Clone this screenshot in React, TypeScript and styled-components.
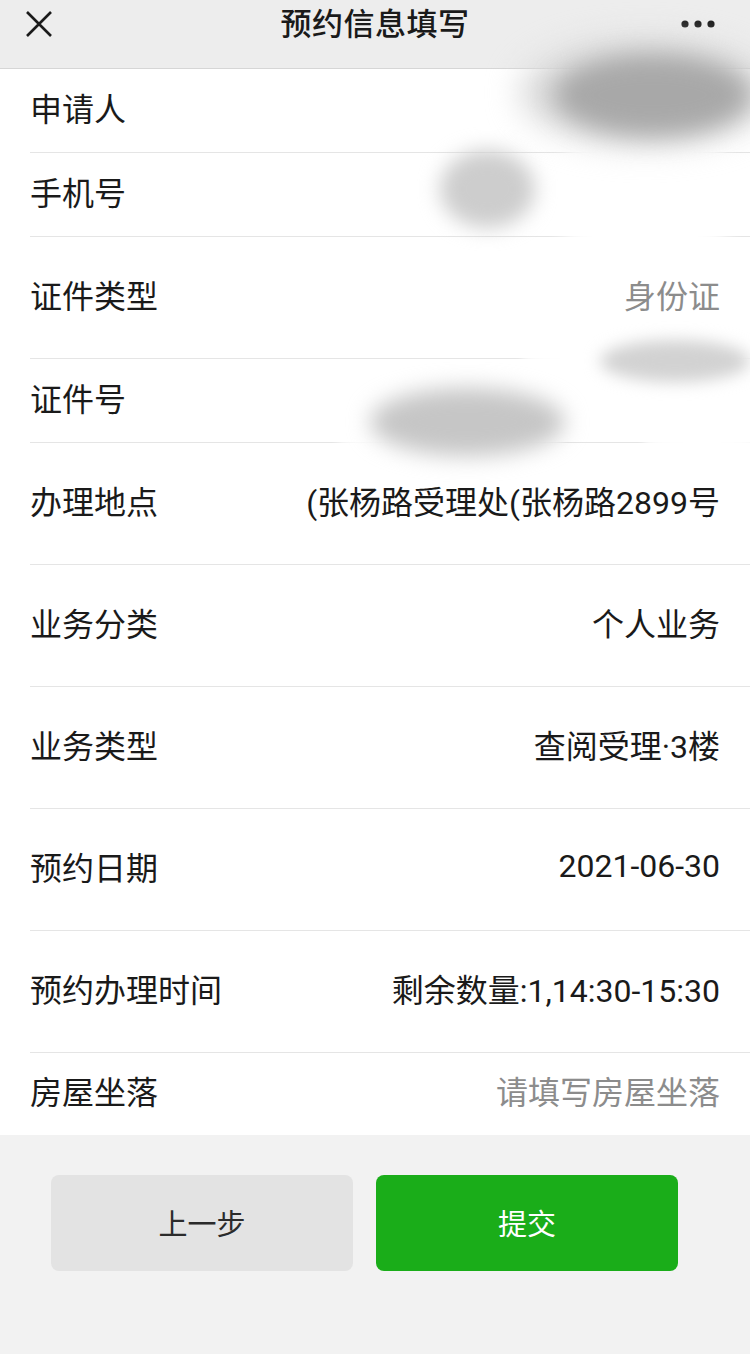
import styled, { createGlobalStyle } from 'styled-components';

type Field = {
	label: string;
	value?: string;
	muted?: boolean;
	size: 'short' | 'tall' | 'last';
};

const fields: Field[] = [
	{ label: '申请人', size: 'short' },
	{ label: '手机号', size: 'short' },
	{ label: '证件类型', value: '身份证', muted: true, size: 'tall' },
	{ label: '证件号', size: 'short' },
	{ label: '办理地点', value: '(张杨路受理处(张杨路2899号', size: 'tall' },
	{ label: '业务分类', value: '个人业务', size: 'tall' },
	{ label: '业务类型', value: '查阅受理·3楼', size: 'tall' },
	{ label: '预约日期', value: '2021-06-30', size: 'tall' },
	{ label: '预约办理时间', value: '剩余数量:1,14:30-15:30', size: 'tall' },
	{ label: '房屋坐落', value: '请填写房屋坐落', muted: true, size: 'last' }
];

const rowHeights = { short: 84, tall: 122, last: 82 };

// redaction smudges lying over the personal data (white wipes first, grey on top)
const smudges = [
	{ x: 525, y: 140, w: 240, h: 110, c: '#ffffff', b: 4 },
	{ x: 520, y: 350, w: 240, h: 18, c: '#ffffff', b: 3 },
	{ x: 335, y: 436, w: 230, h: 14, c: '#ffffff', b: 3 },
	{ x: 642, y: 436, w: 120, h: 14, c: '#ffffff', b: 3 },
	{ x: 520, y: 40, w: 250, h: 105, c: '#d8d8d8', b: 16 },
	{ x: 555, y: 55, w: 195, h: 80, c: '#a8a8a8', b: 12 },
	{ x: 440, y: 150, w: 95, h: 78, c: '#cdcdcd', b: 10 },
	{ x: 600, y: 340, w: 150, h: 42, c: '#d2d2d2', b: 8 },
	{ x: 370, y: 388, w: 195, h: 68, c: '#c6c6c6', b: 11 }
];

const GlobalStyle = createGlobalStyle`
	body {
		margin: 0;
		background: #f2f2f2;
		font-family: Roboto, "Noto Sans CJK SC", sans-serif;
	}
`;

const Page = styled.div`
	width: 750px;
	height: 1354px;
	background: #f2f2f2;
	position: relative;
	overflow: hidden;
`;

const NavBar = styled.header`
	height: 68px;
	background: #ededed;
	border-bottom: 1px solid #d6d6d6;
	display: grid;
	grid-template-columns: 100px 1fr 100px;
	align-items: start;
	padding: 0 25px;
`;

const NavIcon = styled.div<{ $end?: boolean }>`
	height: 48px;
	display: flex;
	align-items: center;
	justify-content: ${(p) => (p.$end ? 'flex-end' : 'flex-start')};
	padding-right: ${(p) => (p.$end ? '10px' : '0')};
`;

const Title = styled.h1`
	margin: 0;
	height: 48px;
	line-height: 50px;
	text-align: center;
	font-size: 31px;
	font-weight: 500;
	color: #1a1a1a;
	letter-spacing: 0.5px;
`;

const List = styled.div`
	background: #fff;
`;

const Row = styled.div`
	padding-left: 30px;
`;

const RowInner = styled.div<{ $height: number; $last?: boolean }>`
	height: ${(p) => p.$height}px;
	box-sizing: border-box;
	border-bottom: ${(p) => (p.$last ? 'none' : '1px solid #e5e5e5')};
	padding: 0 30px 8px 0;
	display: flex;
	align-items: center;
	justify-content: space-between;
`;

const Label = styled.span`
	font-size: 32px;
	color: #1a1a1a;
	white-space: nowrap;
`;

const Value = styled.span<{ $muted?: boolean }>`
	font-size: 32px;
	color: ${(p) => (p.$muted ? '#8c8c8c' : '#1a1a1a')};
	white-space: nowrap;
`;

const Footer = styled.div`
	display: flex;
	gap: 23px;
	padding: 40px 0 0 51px;
`;

const Button = styled.button<{ $primary?: boolean }>`
	width: 302px;
	height: 96px;
	border: none;
	border-radius: 8px;
	font-family: inherit;
	font-size: 29px;
	padding-bottom: 4px;
	background: ${(p) => (p.$primary ? '#1aad19' : '#e3e3e3')};
	color: ${(p) => (p.$primary ? '#fff' : '#2b2b2b')};
`;

const Smudge = styled.div`
	position: absolute;
	border-radius: 50%;
	pointer-events: none;
`;

const CloseIcon = () => (
	<svg width="28" height="28" viewBox="0 0 28 28">
		<path d="M2 2 L26 26 M26 2 L2 26" stroke="#1a1a1a" strokeWidth="2.6" fill="none" />
	</svg>
);

const MoreIcon = () => (
	<svg width="34" height="8" viewBox="0 0 34 8">
		<circle cx="4" cy="4" r="3.6" fill="#1a1a1a" />
		<circle cx="17" cy="4" r="3.6" fill="#1a1a1a" />
		<circle cx="30" cy="4" r="3.6" fill="#1a1a1a" />
	</svg>
);

const App = () => {
	return (
		<Page>
			<GlobalStyle />
			<NavBar>
				<NavIcon>
					<CloseIcon />
				</NavIcon>
				<Title>预约信息填写</Title>
				<NavIcon $end>
					<MoreIcon />
				</NavIcon>
			</NavBar>
			<List>
				{fields.map((f) => (
					<Row key={f.label}>
						<RowInner $height={rowHeights[f.size]} $last={f.size === 'last'}>
							<Label>{f.label}</Label>
							{f.value && <Value $muted={f.muted}>{f.value}</Value>}
						</RowInner>
					</Row>
				))}
			</List>
			<Footer>
				<Button>上一步</Button>
				<Button $primary>提交</Button>
			</Footer>
			{smudges.map((s, i) => (
				<Smudge
					key={i}
					style={{
						left: s.x,
						top: s.y,
						width: s.w,
						height: s.h,
						background: s.c,
						filter: `blur(${s.b}px)`
					}}
				/>
			))}
		</Page>
	);
};

export default App;
